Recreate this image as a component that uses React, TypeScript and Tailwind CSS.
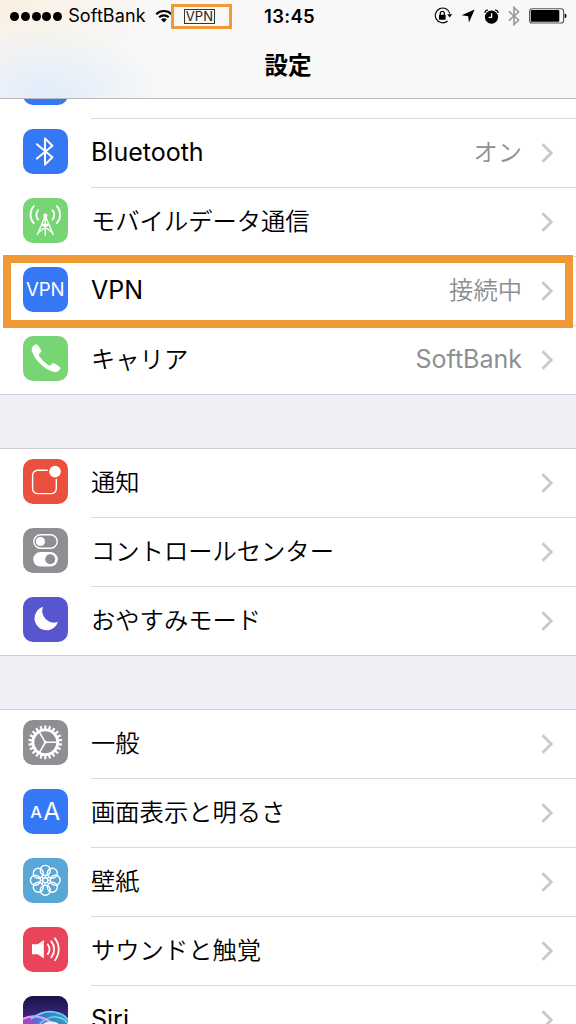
import React from 'react';

type Row = {
  label: string;
  value?: string;
  color: string;
  icon: React.ReactNode;
  highlighted?: boolean;
};

const line = {
  fill: 'none',
  stroke: 'white',
  strokeLinecap: 'round' as const,
  strokeLinejoin: 'round' as const,
};

const BluetoothIcon = () => (
  <path d="M13.9 15.2 29.4 28.3 22 35.6V9.4l7.4 7.3L13.9 29.6" {...line} strokeWidth="2" />
);

const CellularIcon = () => (
  <g {...line} strokeWidth="1.8">
    <circle cx="22.3" cy="17.8" r="1.3" fill="white" />
    <path d="M22.3 18 14.4 36.6M22.3 18l7.9 18.6M22.3 18v19M19 26.5h6.6M19 26.5l10.4 8.3M25.6 26.5 15.2 34.8" strokeWidth="1.4" />
    <path d="M15.2 12.2a7 7 0 0 0 0 9.4M29.4 12.2a7 7 0 0 1 0 9.4M10.8 8.2a12.6 12.6 0 0 0 0 17M33.8 8.2a12.6 12.6 0 0 1 0 17" />
  </g>
);

const PhoneIcon = () => (
  <path
    fill="white"
    stroke="white"
    strokeWidth="0.8"
    d="M10 10.4 12.3 8.9Q13.7 8.2 14.6 9.5L17.7 14Q18.5 15.3 17.4 16.3L16 17.6Q15 18.6 16 20.2Q19.5 26 25.5 29.6Q27 30.4 28 29.4L29.2 28Q30.2 27 31.5 27.8L36.2 30.8Q37.5 31.8 36.6 33.1L35.2 34.8Q33.5 36.4 30 35.4Q23 33.5 16.5 26.8Q10.5 20.5 9.2 14.5Q8.7 11.7 10 10.4Z"
  />
);

const NotificationIcon = () => (
  <g>
    <path d="M24.3 11.3H14.6a5 5 0 0 0-5 5v13.3a5 5 0 0 0 5 5h13.7a5 5 0 0 0 5-5V20.4" {...line} strokeWidth="1.4" />
    <circle cx="32" cy="12.6" r="5.8" fill="white" />
  </g>
);

const ControlCenterIcon = () => (
  <g>
    <rect x="10.8" y="6.8" width="23.4" height="13.4" rx="6.7" {...line} strokeWidth="1.4" />
    <circle cx="17.4" cy="13.5" r="4.6" fill="white" />
    <rect x="10.2" y="24" width="24.6" height="14.6" rx="7.3" fill="white" />
    <circle cx="27.2" cy="31.3" r="5" fill="#8e8e93" />
  </g>
);

const MoonIcon = () => (
  <path fill="white" d="M20 9.8A12 12 0 1 0 35 24.8A11.7 11.7 0 0 1 20 9.8Z" />
);

const teeth = Array.from({ length: 22 }, (_, i) => (i * 360) / 22);

const GearIcon = () => (
  <g {...line} strokeLinecap="butt">
    <circle cx="22.3" cy="22.3" r="12.4" strokeWidth="2.9" />
    {teeth.map((a) => (
      <path key={a} d="M22.3 9.5V5.4" strokeWidth="2.2" transform={`rotate(${a} 22.3 22.3)`} />
    ))}
    <path d="M22.3 22.3h11.5M22.3 22.3l-5.8-10M22.3 22.3l-5.8 10" strokeWidth="1.6" />
    <circle cx="22.3" cy="22.3" r="1.3" fill="white" strokeWidth="0.5" />
  </g>
);

const DisplayIcon = () => (
  <g fill="white" className="font-['Inter']">
    <text x="13.2" y="29" fontSize="16.5" textAnchor="middle" fontWeight="500">A</text>
    <text x="28.8" y="30.6" fontSize="24.5" textAnchor="middle" fontWeight="400">A</text>
  </g>
);

const petals = [0, 45, 90, 135, 180, 225, 270, 315];

const WallpaperIcon = () => (
  <g {...line} strokeWidth="1.4">
    {petals.map((a) => (
      <circle key={a} cx="22.3" cy="12.4" r="5" transform={`rotate(${a} 22.3 22.3)`} />
    ))}
    {petals.map((a) => (
      <path key={a} d="M22.3 19.6v-2.2" strokeWidth="1" transform={`rotate(${a} 22.3 22.3)`} />
    ))}
    <circle cx="22.3" cy="22.3" r="2.6" />
  </g>
);

const SoundIcon = () => (
  <g>
    <path fill="white" d="M9 17.2h5.8l6-4.2v18.4l-6-4.2H9z" />
    <path d="M24.8 17.5a8 8 0 0 1 0 9.6M28.3 14.3a12.5 12.5 0 0 1 0 16M31.9 11.4a17.5 17.5 0 0 1 0 21.8" {...line} strokeWidth="1.8" />
  </g>
);

const SiriIcon = () => (
  <g>
    <defs>
      <linearGradient id="siriBg" x1="0" y1="0" x2="0" y2="1">
        <stop offset="0" stopColor="#1b1148" />
        <stop offset="0.5" stopColor="#3c2a80" />
        <stop offset="1" stopColor="#141033" />
      </linearGradient>
      <linearGradient id="siriPink" x1="0" x2="1">
        <stop offset="0" stopColor="#c94fd6" />
        <stop offset="1" stopColor="#5b6cf0" />
      </linearGradient>
      <linearGradient id="siriBlue" x1="0" x2="1">
        <stop offset="0" stopColor="#4a6ee6" />
        <stop offset="0.5" stopColor="#2fa6e6" />
        <stop offset="1" stopColor="#35c9c8" />
      </linearGradient>
    </defs>
    <rect width="45" height="45" rx="9" fill="url(#siriBg)" />
    <path d="M0 23Q9 18 20 22T38 37V45H0z" fill="url(#siriPink)" opacity="0.8" />
    <path d="M10 23Q20 14 31 16T45 24V45H14z" fill="url(#siriBlue)" opacity="0.75" />
    <path d="M0 23Q9 18 20 22T40 38" fill="none" stroke="#f29af0" strokeWidth="2" />
    <path d="M8 23Q20 14 31 16T45 24" fill="none" stroke="#6ad6f8" strokeWidth="1.6" />
    <path d="M16 29Q24 20 33 21T45 28" fill="none" stroke="#8ce6fa" strokeWidth="1.4" opacity="0.8" />
    <ellipse cx="28" cy="29" rx="8" ry="3.5" fill="#e2f7ff" />
  </g>
);

const VpnIcon = () => (
  <text x="22.3" y="29" fontSize="18.6" textAnchor="middle" fill="white" className="font-['Inter']" letterSpacing="-0.1">VPN</text>
);

const groups: Row[][] = [
  [
    { label: 'Wi-Fi', color: 'bg-[#3478f6]', icon: null },
    { label: 'Bluetooth', value: 'オン', color: 'bg-[#3478f6]', icon: <BluetoothIcon /> },
    { label: 'モバイルデータ通信', color: 'bg-[#77d673]', icon: <CellularIcon /> },
    { label: 'VPN', value: '接続中', color: 'bg-[#3478f6]', icon: <VpnIcon />, highlighted: true },
    { label: 'キャリア', value: 'SoftBank', color: 'bg-[#77d673]', icon: <PhoneIcon /> },
  ],
  [
    { label: '通知', color: 'bg-[#eb4f3d]', icon: <NotificationIcon /> },
    { label: 'コントロールセンター', color: 'bg-[#8e8e93]', icon: <ControlCenterIcon /> },
    { label: 'おやすみモード', color: 'bg-[#5756ce]', icon: <MoonIcon /> },
  ],
  [
    { label: '一般', color: 'bg-[#8e8e93]', icon: <GearIcon /> },
    { label: '画面表示と明るさ', color: 'bg-[#3478f6]', icon: <DisplayIcon /> },
    { label: '壁紙', color: 'bg-[#59a7d7]', icon: <WallpaperIcon /> },
    { label: 'サウンドと触覚', color: 'bg-[#ea445a]', icon: <SoundIcon /> },
    { label: 'Siri', color: 'bg-[#1b1148]', icon: <SiriIcon /> },
  ],
];

// Latin labels run a touch larger than the Japanese ones
const textStyle = (text: string) =>
  /^[\x20-\x7e]+$/.test(text) ? 'text-[25px] font-normal' : 'text-[24.3px] font-[350]';

const SettingsRow = ({ row, last }: { row: Row; last: boolean }) => (
  <div className="relative flex h-[69px] pl-[23px]">
    <div className={`mt-[10px] mr-[23px] h-[45px] w-[45px] shrink-0 overflow-hidden rounded-[10px] ${row.color}`}>
      <svg width="45" height="45" viewBox="0 0 45 45">{row.icon}</svg>
    </div>
    <div className={`flex flex-1 items-center border-b pr-[23px] pb-px ${last ? 'border-transparent' : 'border-[#d9d9dc]'}`}>
      <span className={`flex-1 leading-none text-black ${textStyle(row.label)}`}>{row.label}</span>
      {row.value && <span className={`leading-none text-[#8e8e93] ${textStyle(row.value)}`}>{row.value}</span>}
      <svg className="ml-[19px]" width="12" height="20" viewBox="0 0 12 20">
        <path d="M1.5 1.2 10.3 10 1.5 18.8" fill="none" stroke="#c7c7cc" strokeWidth="2.7" />
      </svg>
    </div>
    {row.highlighted && (
      <div className="absolute -top-[2px] left-[3px] z-10 h-[73px] w-[570px] border-8 border-[#f09a37]" />
    )}
  </div>
);

const StatusBar = () => (
  <div className="flex h-8 items-center justify-between pr-[9px] pl-[10px]">
    <div className="flex w-[222px] items-center">
      <div className="flex gap-[1.8px]">
        {[0, 1, 2, 3, 4].map((i) => (
          <span key={i} className="h-[9px] w-[9px] rounded-full bg-black" />
        ))}
      </div>
      <span className="ml-[6px] w-[87px] text-[18px] leading-none tracking-[0.1px]">SoftBank</span>
      <svg className="shrink-0" width="18" height="14" viewBox="0 0 18 14">
        <g fill="none" stroke="black" strokeWidth="2.1">
          <path d="M1.2 5.2a11 11 0 0 1 15.4 0" />
          <path d="M4.1 8.3a6.9 6.9 0 0 1 9.6 0" />
        </g>
        <path d="M6 10.4a4 4 0 0 1 5.8 0L8.9 13.4z" />
      </svg>
      <div className="-ml-[2px] flex h-[25px] w-[61px] shrink-0 items-center border-3 border-[#f09a37] pl-[10px]">
        <span className="flex h-[15px] w-[31px] items-center justify-center border border-[#333] text-[13px] leading-none tracking-[0.2px] text-[#222]">VPN</span>
      </div>
    </div>
    <span className="pl-[2px] text-[18.5px] leading-none font-semibold tracking-[0.3px]">13:45</span>
    <div className="flex w-[222px] items-center justify-end">
      <svg width="18" height="18" viewBox="0 0 18 18">
        <path d="M15.9 6.6A7.4 7.4 0 1 0 13.6 14" fill="none" stroke="black" strokeWidth="1.1" />
        <path d="M13.2 7.2h5L15.7 10.6z" />
        <rect x="5" y="7.8" width="6.6" height="5" rx="0.6" />
        <path d="M6.3 8V6.3a2 2 0 0 1 4 0V8" fill="none" stroke="black" strokeWidth="1.2" />
      </svg>
      <svg className="ml-[9px]" width="14" height="14" viewBox="0 0 14 14">
        <path d="M13.6.6 8 13.6 7.2 7.3.6 6.2z" />
      </svg>
      <svg className="ml-[9px]" width="15" height="15" viewBox="0 0 15 15">
        <circle cx="7.5" cy="8.1" r="6.6" />
        <path d="M7.6 4.3v4.1H4.7" fill="none" stroke="white" strokeWidth="1.3" />
        <path d="M.7 3.8A4 4 0 0 1 3.9.9M14.3 3.8A4 4 0 0 0 11.1.9" fill="none" stroke="black" strokeWidth="1.3" />
      </svg>
      <svg className="ml-[9px]" width="12" height="20" viewBox="0 0 12 20">
        <path d="M.8 5.3 10.6 14 6 18.6V1.4L10.6 6 .8 14.7" fill="none" stroke="#999" strokeWidth="1.6" />
      </svg>
      <svg className="ml-[9px]" width="38" height="16" viewBox="0 0 38 16">
        <rect x="0.6" y="0.8" width="34" height="14.2" rx="2.6" fill="none" stroke="#555" strokeWidth="1.1" />
        <rect x="1.8" y="2" width="28.5" height="11.8" rx="1.2" />
        <path d="M35.6 5.6q2 .5 2 2.3t-2 2.3z" />
      </svg>
    </div>
  </div>
);

const App = () => {
  return (
    <div className="h-[1024px] w-[576px] overflow-hidden bg-[#efeef4] font-['Inter','Noto_Sans_CJK_JP',sans-serif]">
      <header className="relative z-20 h-[99px] border-b border-[#bcbcbf] bg-[#f8f8f8] bg-[radial-gradient(ellipse_120px_75px_at_45px_100%,#e0ecfa,transparent),radial-gradient(ellipse_160px_90px_at_0_0,#fbf0e2,transparent)]">
        <StatusBar />
        <h1 className="mt-[22px] text-center text-[23.5px] leading-none font-bold">設定</h1>
      </header>

      <main className="-mt-[49px]">
        {groups.map((rows, i) => (
          <section
            key={i}
            className={
              i === 0
                ? 'mb-[53px] bg-white shadow-[inset_0_-1px_0_#cfced4]'
                : 'mb-[53px] border-t border-[#cfced4] bg-white shadow-[inset_0_-1px_0_#cfced4]'
            }
          >
            {rows.map((row, j) => (
              <SettingsRow key={row.label} row={row} last={j === rows.length - 1} />
            ))}
          </section>
        ))}
      </main>
    </div>
  );
};

export default App;
